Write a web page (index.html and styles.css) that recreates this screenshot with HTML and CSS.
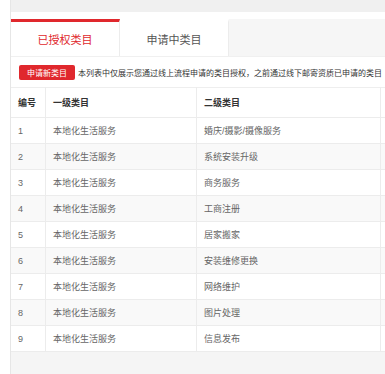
FILE: index.html
```html
<!DOCTYPE html>
<html>

<head>
    <meta charset="UTF-8">
    <title>类目管理</title>
    <link rel="stylesheet" href="styles.css">
</head>

<body>
    <div class="main">
        <div class="top-strip"></div>
        <div class="tab-bar">
            <div class="tab active">已授权类目</div>
            <div class="tab">申请中类目</div>
        </div>
        <div class="panel">
            <div class="toolbar">
                <button class="btn-red">申请新类目</button>
                <span class="note">本列表中仅展示您通过线上流程申请的类目授权，之前通过线下邮寄资质已申请的类目</span>
            </div>
            <table class="cat-table">
                <thead>
                    <tr>
                        <th class="col-no">编号</th>
                        <th class="col-first">一级类目</th>
                        <th class="col-second">二级类目</th>
                        <th></th>
                    </tr>
                </thead>
                <tbody>
                    <tr><td>1</td><td>本地化生活服务</td><td>婚庆/摄影/摄像服务</td><td></td></tr>
                    <tr><td>2</td><td>本地化生活服务</td><td>系统安装升级</td><td></td></tr>
                    <tr><td>3</td><td>本地化生活服务</td><td>商务服务</td><td></td></tr>
                    <tr><td>4</td><td>本地化生活服务</td><td>工商注册</td><td></td></tr>
                    <tr><td>5</td><td>本地化生活服务</td><td>居家搬家</td><td></td></tr>
                    <tr><td>6</td><td>本地化生活服务</td><td>安装维修更换</td><td></td></tr>
                    <tr><td>7</td><td>本地化生活服务</td><td>网络维护</td><td></td></tr>
                    <tr><td>8</td><td>本地化生活服务</td><td>图片处理</td><td></td></tr>
                    <tr><td>9</td><td>本地化生活服务</td><td>信息发布</td><td></td></tr>
                </tbody>
            </table>
        </div>
        <div class="page-bottom"></div>
    </div>
</body>

</html>
```

FILE: styles.css
```css
/* 类目管理页 */
body {
    font-family: "Liberation Sans", "Noto Sans CJK SC", sans-serif;
    margin: 0;
    padding: 0;
    background-color: #fff;
    overflow: hidden;
}

.main {
    margin-left: 10px;
    border-left: 1px solid #e6e6e6;
    width: 600px;
}

.top-strip {
    height: 12px;
    background-color: #f0f0f0;
    margin-bottom: 7px;
}

.tab-bar {
    display: flex;
    background-color: #f6f6f6;
    height: 37px;
}

.tab {
    width: 109px;
    background-color: #fff;
    border-right: 1px solid #ececec;
    border-top: 3px solid #fff;
    color: #555;
    font-size: 11px;
    display: flex;
    align-items: center;
    justify-content: center;
    box-sizing: border-box;
}

.tab.active {
    border-top-color: #e0282d;
    color: #e0282d;
}

.panel {
    background-color: #fff;
    border-top: 1px solid #f0f0f0;
}

.toolbar {
    display: flex;
    align-items: center;
    padding: 8px 8px 7px 8px;
    white-space: nowrap;
}

.btn-red {
    background-color: #e0282d;
    color: #fff;
    border: none;
    border-radius: 2px;
    font-family: inherit;
    font-size: 8px;
    width: 56px;
    height: 15px;
    padding: 0;
    margin-right: 3px;
}

.note {
    font-size: 8px;
    color: #333;
}

.cat-table {
    border-collapse: collapse;
    width: 600px;
    table-layout: fixed;
    border-top: 1px solid #eee;
}

.cat-table th,
.cat-table td {
    border-right: 1px solid #ececec;
    border-bottom: 1px solid #ececec;
    text-align: left;
    padding: 0 7px;
    font-size: 9px;
}

.cat-table th {
    height: 29px;
    color: #333;
    font-weight: bold;
}

.cat-table td {
    height: 25px;
    color: #666;
}

.cat-table tbody tr:nth-child(even) {
    background-color: #f9f9f9;
}

.col-no {
    width: 20px;
}

.col-first {
    width: 136px;
}

.col-second {
    width: 169px;
}

.page-bottom {
    height: 40px;
    background-color: #f5f5f5;
}
```
